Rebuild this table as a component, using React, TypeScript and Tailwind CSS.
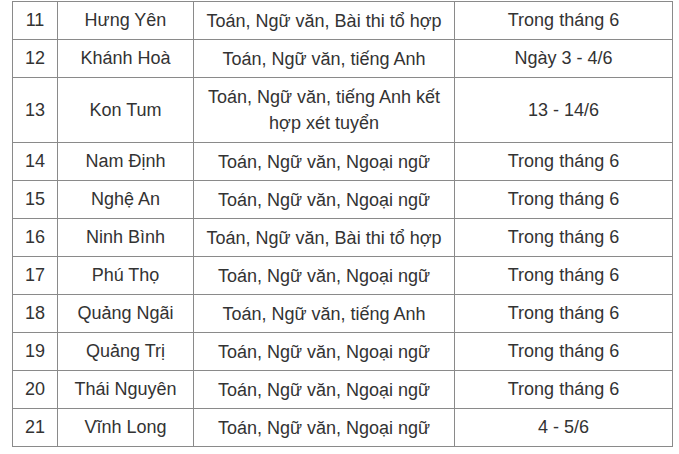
const rows: [string, string, string, string][] = [
  ['11', 'Hưng Yên', 'Toán, Ngữ văn, Bài thi tổ hợp', 'Trong tháng 6'],
  ['12', 'Khánh Hoà', 'Toán, Ngữ văn, tiếng Anh', 'Ngày 3 - 4/6'],
  ['13', 'Kon Tum', 'Toán, Ngữ văn, tiếng Anh kết hợp xét tuyển', '13 - 14/6'],
  ['14', 'Nam Định', 'Toán, Ngữ văn, Ngoại ngữ', 'Trong tháng 6'],
  ['15', 'Nghệ An', 'Toán, Ngữ văn, Ngoại ngữ', 'Trong tháng 6'],
  ['16', 'Ninh Bình', 'Toán, Ngữ văn, Bài thi tổ hợp', 'Trong tháng 6'],
  ['17', 'Phú Thọ', 'Toán, Ngữ văn, Ngoại ngữ', 'Trong tháng 6'],
  ['18', 'Quảng Ngãi', 'Toán, Ngữ văn, tiếng Anh', 'Trong tháng 6'],
  ['19', 'Quảng Trị', 'Toán, Ngữ văn, Ngoại ngữ', 'Trong tháng 6'],
  ['20', 'Thái Nguyên', 'Toán, Ngữ văn, Ngoại ngữ', 'Trong tháng 6'],
  ['21', 'Vĩnh Long', 'Toán, Ngữ văn, Ngoại ngữ', '4 - 5/6'],
];

export default function App() {
  return (
    <div className="w-[679px] h-[454px] bg-white pl-[12px] pt-px font-['Liberation_Sans',Arial,sans-serif] text-[18px] text-[#333]">
      <table className="table-fixed border-collapse w-[660px]">
        <colgroup>
          <col className="w-[45px]" />
          <col className="w-[136px]" />
          <col className="w-[261px]" />
          <col className="w-[218px]" />
        </colgroup>
        <tbody>
          {rows.map(([stt, tinh, mon, ngay]) => (
            <tr key={stt} className={stt === '13' ? 'h-[65px]' : 'h-[38px]'}>
              <td className="border border-[#8a8a8a] text-center align-middle">{stt}</td>
              <td className="border border-[#8a8a8a] text-center align-middle">{tinh}</td>
              <td className="border border-[#8a8a8a] text-center align-middle px-3 leading-[26px]">{mon}</td>
              <td className="border border-[#8a8a8a] text-center align-middle">{ngay}</td>
            </tr>
          ))}
        </tbody>
      </table>
    </div>
  );
}
